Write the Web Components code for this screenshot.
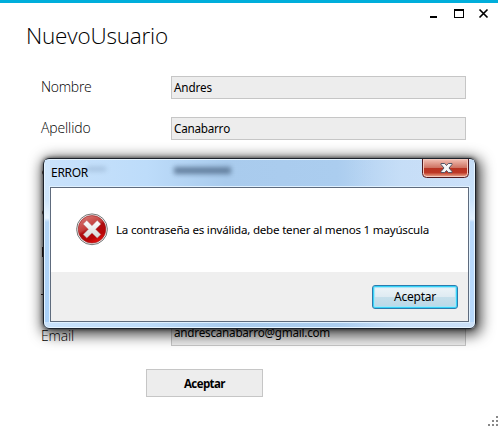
<!DOCTYPE html>
<html lang="es"><head><meta charset="utf-8"><title>NuevoUsuario</title>
<style>html,body{margin:0;height:100%;overflow:hidden;background:#fff}</style></head>
<body><app-window></app-window>
<script>
const define=(name,html,init)=>customElements.define(name,class extends HTMLElement{
  connectedCallback(){
    if(this.shadowRoot)return;
    this.attachShadow({mode:'open'}).innerHTML=html;
    if(init)init(this,this.shadowRoot);
  }
});

// One line of text, tracked so that it fills the width given in its "w" attribute.
define('ui-text',`<style>:host{display:block;white-space:pre;font-kerning:none}span{display:inline-block;white-space:pre}</style><span><slot></slot></span>`,(el,root)=>{
  const span=root.querySelector('span'),w=+el.getAttribute('w'),n=el.textContent.length;
  if(w)span.style.letterSpacing=((w-span.getBoundingClientRect().width)/n)+'px';
});

define('window-controls',`<style>:host{display:block;height:20px}svg{display:block}</style>
<svg width="498" height="20"><path fill="#000" d="M430 13h7v2h-7z"/><path fill="#000" fill-rule="evenodd" d="M454 6h10v9h-10zM455 8v6h8v-6z"/><path d="M479.5 6.5l8 8M487.5 6.5l-8 8" stroke="#000" stroke-width="1.7"/></svg>`);

define('form-row',`<style>:host{display:grid;grid-template-columns:130px 295px;height:23px;margin-bottom:18px}
.label{font:300 14px/21px "Open Sans","Noto Sans",sans-serif;color:#000;padding-top:var(--label-drop,0px)}
.field{box-sizing:border-box;border:1px solid #c6c6c6;background:#ededed;padding-left:2px;font:11.700px/20px "Noto Sans","Open Sans",sans-serif;color:#000;overflow:hidden}</style>
<div class="label"><slot name="label"></slot></div><div class="field"><slot></slot></div>`);

define('flat-button',`<style>:host{display:flex;box-sizing:border-box;width:117px;height:28px;border:1px solid #c6c6c6;background:#ededed;padding-left:37px;font:700 11.5px/28px "Open Sans","Noto Sans",sans-serif;color:#000}</style><slot></slot>`);

define('size-grip',`<style>:host{display:block;position:absolute;right:0;bottom:1px}svg{display:block}</style>
<svg width="10" height="10" fill="#888"><path d="M8 0h2v2h-2zM4 4h2v2H4zM8 4h2v2h-2zM0 8h2v2H0zM4 8h2v2H4zM8 8h2v2h-2z"/></svg>`);

define('close-button',`<style>:host{display:block;width:47px;height:19px}svg{display:block}</style>
<svg width="47" height="19"><defs><linearGradient id="r" x1="0" y1="0" x2="0" y2="1"><stop stop-color="#efb9ad"/><stop offset=".47" stop-color="#cf7464"/><stop offset=".5" stop-color="#b83322"/><stop offset=".78" stop-color="#bd3725"/><stop offset="1" stop-color="#e3957c"/></linearGradient></defs>
<path d="M.5 0V14.500q0 4 4 4h38q4 0 4-4V0" fill="#f5c9be" stroke="#501a20"/>
<path d="M2 1V14q0 3 3 3h37q3 0 3-3V1z" fill="url(#r)"/>
<path d="M19 4.500h3.700l1.800 2 1.800-2h3.700v1l-3 3.500 3 3.500v1h-3.700l-1.800-2-1.800 2H19v-1l3-3.500-3-3.500z" fill="#f6f6f6" stroke="#535666" stroke-width="1"/></svg>`);

define('error-icon',`<style>:host{display:block;width:32px;height:33px}svg{display:block}</style>
<svg width="32" height="33" viewBox="0 0 32 33"><defs><linearGradient id="g" x1=".2" y1="0" x2=".7" y2="1"><stop stop-color="#d77a76"/><stop offset=".42" stop-color="#c43d3a"/><stop offset=".5" stop-color="#ae0d10"/><stop offset=".78" stop-color="#b80506"/><stop offset="1" stop-color="#ed1712"/></linearGradient><linearGradient id="x" x1="0" y1="0" x2="0" y2="1"><stop stop-color="#fff"/><stop offset="1" stop-color="#d5d8d6"/></linearGradient></defs>
<circle cx="16" cy="16.300" r="15.400" fill="#f1f1f1" stroke="#777" stroke-width="1"/><circle cx="16" cy="16.300" r="13.800" fill="url(#g)" stroke="#991d20" stroke-width=".6"/>
<path d="M10.800 7.500L16 12.700l5.200-5.200 3.600 3.600-5.200 5.200 5.200 5.200-3.600 3.600L16 19.900l-5.200 5.200-3.600-3.600 5.200-5.200-5.200-5.200z" fill="url(#x)" stroke="#b9898b" stroke-width=".5"/></svg>`);

define('glass-button',`<style>:host{display:block;box-sizing:border-box;width:86px;height:24px;border:1px solid #2c7bad;border-radius:3px;padding-left:21px;background:linear-gradient(#eef5f9,#dfebf2 48%,#c6dfeb 52%,#bad8e7);box-shadow:inset 0 0 0 1px #35d3f8,inset 0 0 1px 2px #a3e4f7;font:12px/22px "Noto Sans","Open Sans",sans-serif;color:#000}</style><slot></slot>`);

define('error-dialog',`<style>
:host{display:grid;grid-template-rows:28px 135px;position:absolute;left:43px;top:155px;width:433px;height:171px;box-sizing:border-box;border:1px solid #1c222b;border-radius:6px;padding:0 6px 6px;
background:linear-gradient(90deg,#fff0 70%,#cfe3fa99),linear-gradient(90deg,#c9e2fb 0,#bddcfa 24%,#a9cbed 42%,#abcdef 68%,#c3dcf6 83%,#c5ddf7);
box-shadow:inset 0 0 0 1px #e6f4ff,0 0 4px 0 #000a,2px 3px 14px 3px #000000b8;font:11.600px/18px "Noto Sans","Open Sans",sans-serif;color:#000}
.side{position:absolute;top:1px;bottom:6px;width:5px}
.l{left:1px;background:linear-gradient(#d0e7fd,#cfe6fc 40px,#eaf5ff 58px,#b4d6f7 62px,#a9d0f8)}
.r{right:1px;background:linear-gradient(#c5ddf7,#cbe3fb 40px,#e3f1ff 59px,#b9d9fb 62px,#b7d8fb)}
header{display:flex;justify-content:space-between;padding:0 0 0 1px;position:relative}
header ui-text{padding-top:5px;position:relative;font-size:12px}
.ghost{position:absolute;top:8px;left:124px;width:57px;height:7px;background:#56718f;filter:blur(2.500px);opacity:.85}
.ghost.a{left:37px;width:19px;height:4px;opacity:.3}
main{box-sizing:border-box;border:1px solid #5e6b7d;background:#fff;box-shadow:0 0 0 1px #e0f1ff;display:grid;grid-template-rows:84px 49px;position:relative}
.msg{display:flex;padding:25px 0 0 25px;gap:8px}.msg ui-text{padding-top:8px}
footer{background:#efefef;display:flex;justify-content:flex-end;padding:13px 10px 0 0}
</style><i class="side l"></i><i class="side r"></i>
<header><i class="ghost a"></i><i class="ghost"></i><ui-text w="37">ERROR</ui-text><close-button></close-button></header>
<main><div class="msg"><error-icon></error-icon><ui-text w="313">La contraseña es inválida, debe tener al menos 1 mayúscula</ui-text></div><footer><glass-button><ui-text w="42">Aceptar</ui-text></glass-button></footer></main>`);

define('app-window',`<style>
:host{display:block;position:relative;box-sizing:border-box;width:498px;height:427px;border-top:3px solid #00aedb;background:#fff;overflow:hidden}
.title{font:300 22.500px/28px "Open Sans","Noto Sans",sans-serif;padding-left:26px;height:51px;box-sizing:border-box;margin-top:-1px;color:#000}
.form{padding-left:41px;margin-top:3px;display:flow-root}
.gap{height:163px}
.low{--label-drop:4px;margin-bottom:0}
.actions{margin-left:146px;margin-top:25px}
.traces{position:absolute;left:41px;top:163px}
.traces svg{display:block}
</style><window-controls></window-controls>
<div class="title"><ui-text w="142">NuevoUsuario</ui-text></div>
<div class="form">
<form-row><ui-text slot="label" w="50.5">Nombre</ui-text><ui-text w="38">Andres</ui-text></form-row>
<form-row><ui-text slot="label" w="49.5">Apellido</ui-text><ui-text w="56">Canabarro</ui-text></form-row>
<div class="gap"></div>
<form-row class="low"><ui-text slot="label" w="33">Email</ui-text><ui-text w="156">andrescanabarro@gmail.com</ui-text></form-row>
</div>
<div class="actions"><flat-button><ui-text w="41">Aceptar</ui-text></flat-button></div>
<div class="traces"><svg width="3" height="140" fill="none" stroke="#3b2a26"><path d="M3 3Q0 6.500 3 10M3 43Q0 46.500 3 50M1.500 81v10M0 128.500h3"/></svg></div>
<size-grip></size-grip><error-dialog></error-dialog>`);
</script></body></html>
